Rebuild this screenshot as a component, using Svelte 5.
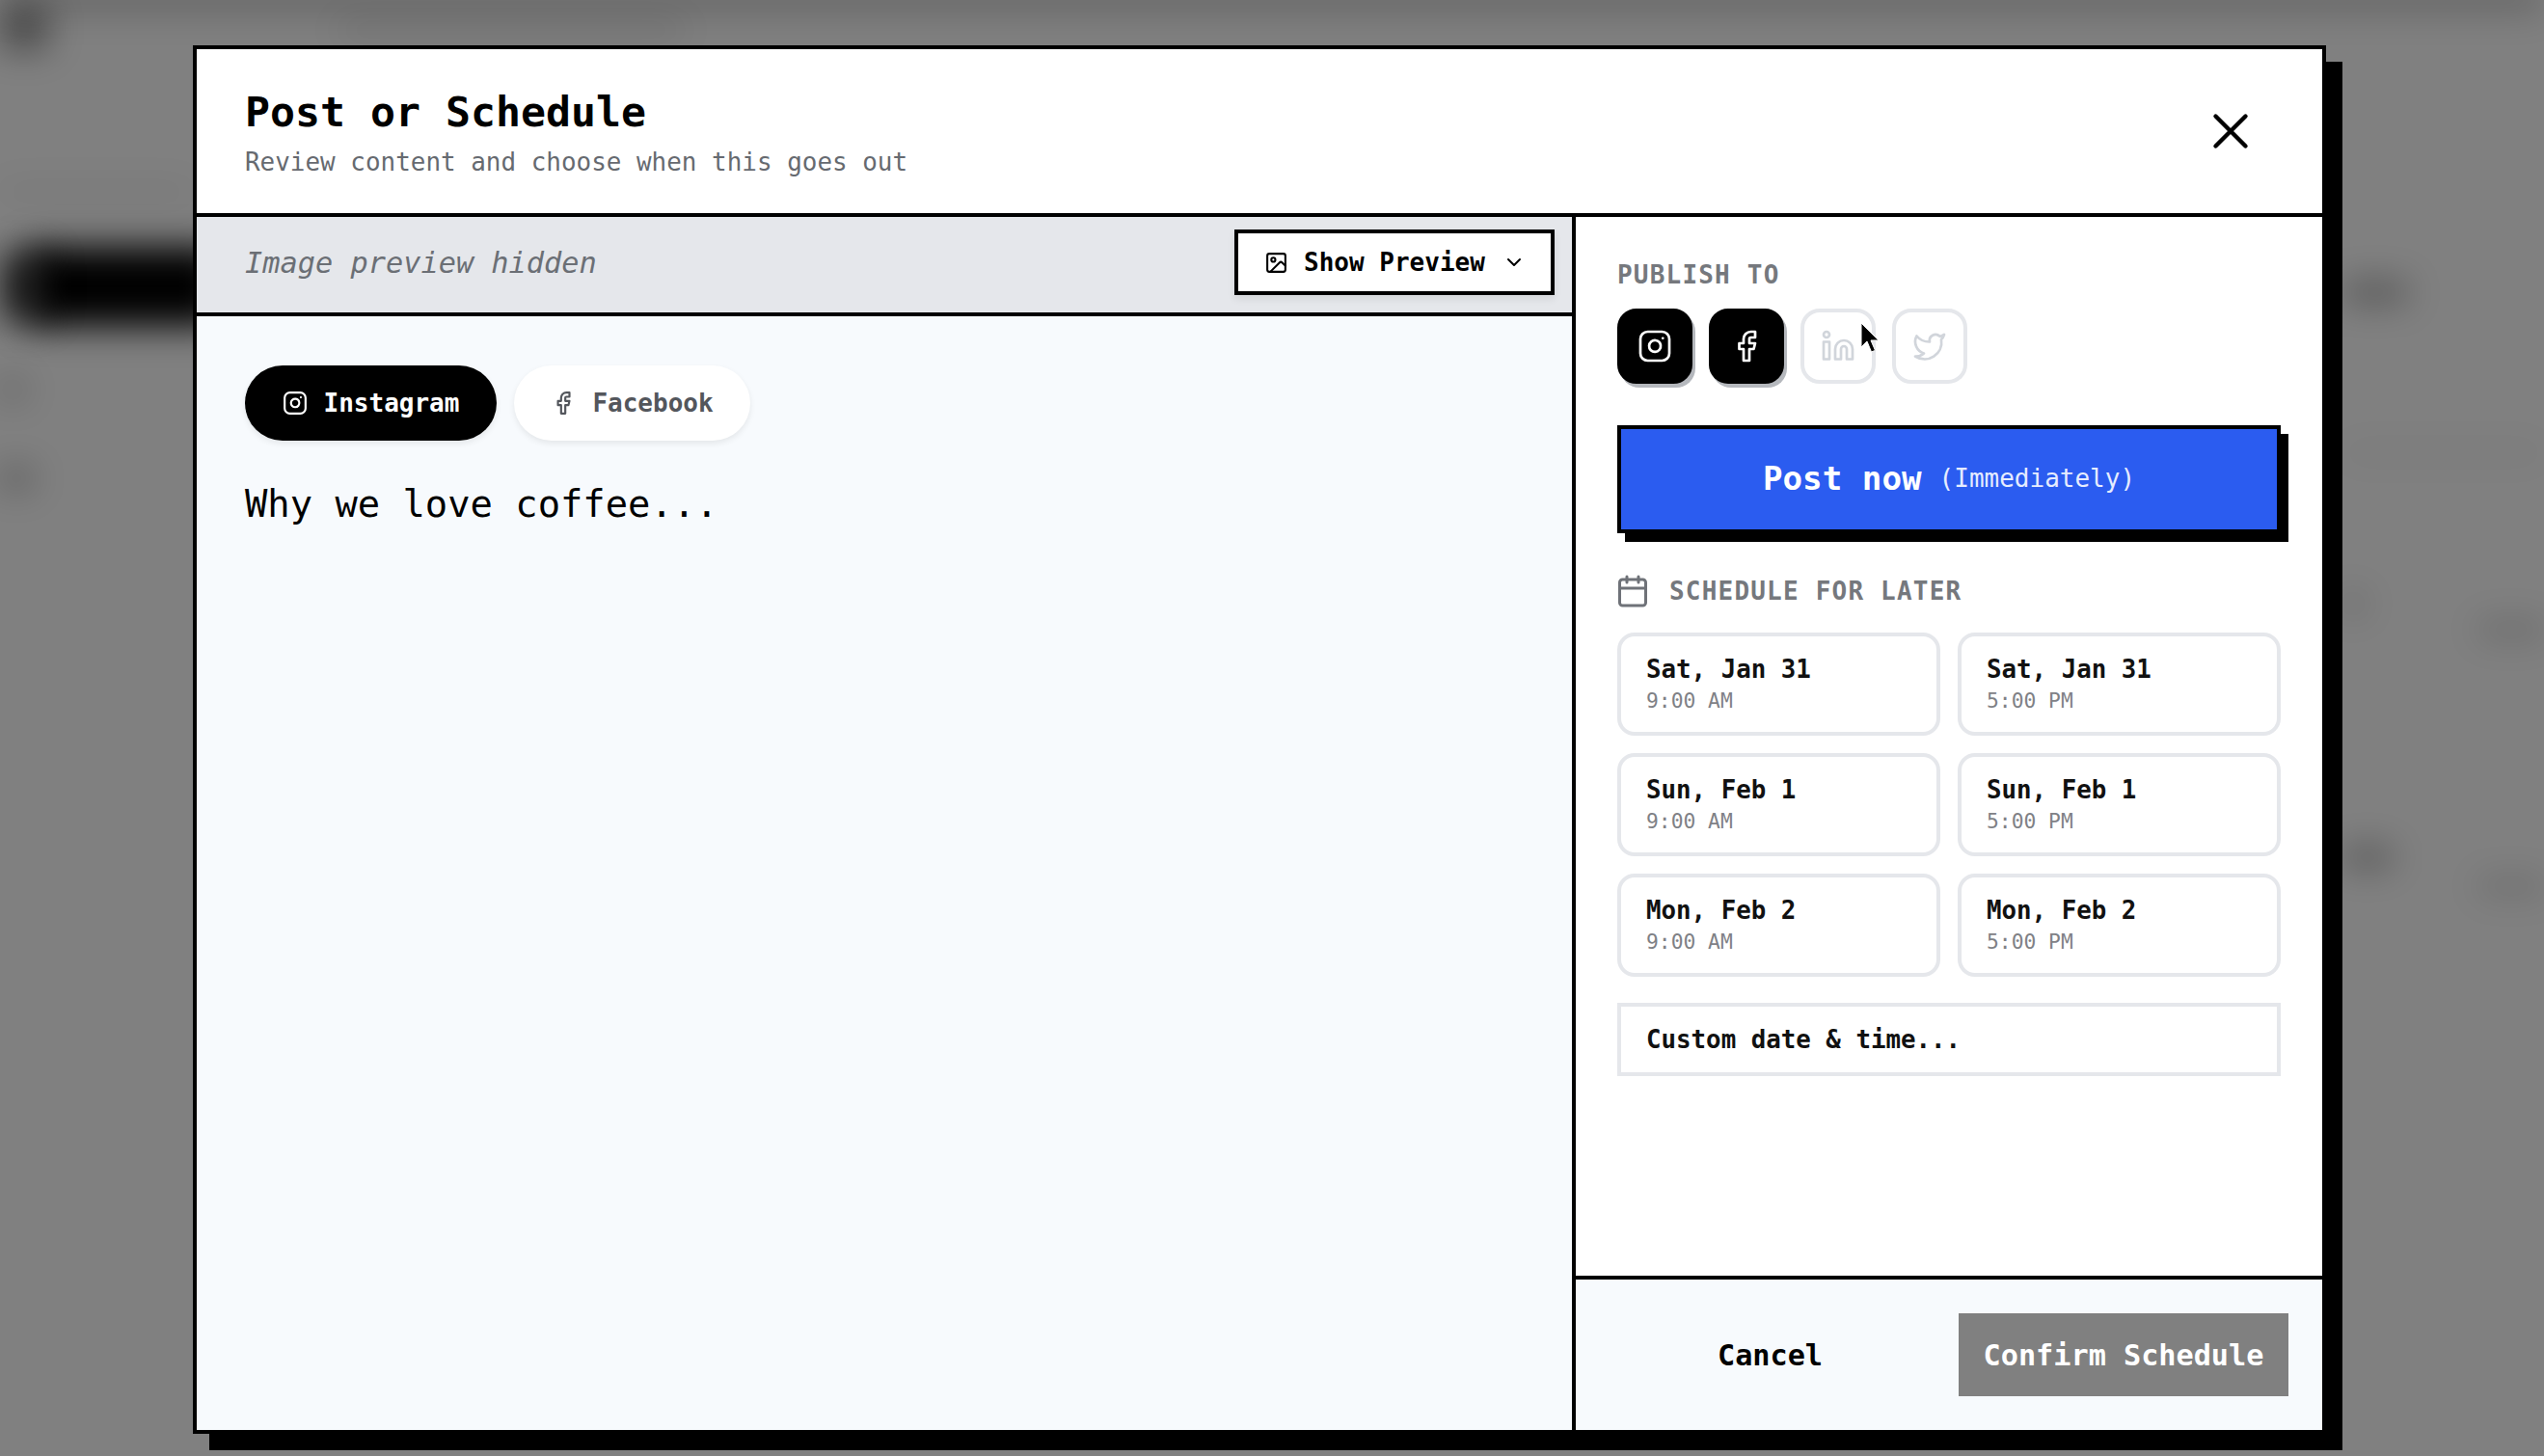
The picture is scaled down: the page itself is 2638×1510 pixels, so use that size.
<script lang="ts">
	const channels = [
		{ id: 'instagram', label: 'Instagram' },
		{ id: 'facebook', label: 'Facebook' }
	];

	const targets = [
		{ id: 'instagram', on: true },
		{ id: 'facebook', on: true },
		{ id: 'linkedin', on: false },
		{ id: 'twitter', on: false }
	];

	const days = ['Sat, Jan 31', 'Sun, Feb 1', 'Mon, Feb 2'];
	const slots = days.flatMap((day) => [
		{ day, time: '9:00 AM' },
		{ day, time: '5:00 PM' }
	]);

	// blurred leftovers of the page behind the dialog
	const smudges = [
		{ x: 0, y: 6, w: 50, h: 46, o: 0.4 },
		{ x: 0, y: -14, w: 2638, h: 26, o: 0.22 },
		{ x: 350, y: 22, w: 360, h: 18, o: 0.1 },
		{ x: 30, y: 256, w: 200, h: 82, o: 1 },
		{ x: 0, y: 262, w: 50, h: 70, o: 0.7 },
		{ x: 0, y: 195, w: 200, h: 8, o: 0.14 },
		{ x: 0, y: 392, w: 26, h: 24, o: 0.22 },
		{ x: 0, y: 484, w: 34, h: 24, o: 0.28 },
		{ x: 2430, y: 292, w: 66, h: 22, o: 0.34 },
		{ x: 2430, y: 465, w: 208, h: 8, o: 0.1 },
		{ x: 2430, y: 615, w: 20, h: 22, o: 0.22 },
		{ x: 2570, y: 645, w: 68, h: 16, o: 0.2 },
		{ x: 2430, y: 878, w: 50, h: 22, o: 0.32 },
		{ x: 2570, y: 912, w: 68, h: 14, o: 0.2 }
	];

	let activeChannel = $state('instagram');
</script>

{#snippet icon(name: string)}
	<svg class="icon" viewBox="0 0 24 24" fill="none" stroke="currentColor" stroke-linecap="round" stroke-linejoin="round">
		{#if name === 'instagram'}
			<rect x="2" y="2" width="20" height="20" rx="5" />
			<path d="M16 11.37A4 4 0 1 1 12.63 8 4 4 0 0 1 16 11.37z" />
			<path d="M17.5 6.5h.01" />
		{:else if name === 'facebook'}
			<path d="M18 2h-3a5 5 0 0 0-5 5v3H7v4h3v8h4v-8h3l1-4h-4V7a1 1 0 0 1 1-1h3z" />
		{:else if name === 'linkedin'}
			<path d="M16 8a6 6 0 0 1 6 6v7h-4v-7a2 2 0 0 0-2-2 2 2 0 0 0-2 2v7h-4v-7a6 6 0 0 1 6-6z" />
			<rect x="2" y="9" width="4" height="12" />
			<circle cx="4" cy="4" r="2" />
		{:else if name === 'twitter'}
			<path d="M22 4s-.7 2.1-2 3.4c1.6 10-9.4 17.3-18 11.6 2.2.1 4.4-.6 6-2C3 15.5.5 9.6 3 5c2.2 2.6 5.6 4.1 9 4-.9-4.2 4-6.6 7-3.8 1.1 0 3-1.2 3-1.2z" />
		{:else if name === 'calendar'}
			<path d="M8 2v4M16 2v4M3 10h18" />
			<rect x="3" y="4" width="18" height="18" rx="2" />
		{:else if name === 'image'}
			<rect x="3" y="3" width="18" height="18" rx="2" />
			<circle cx="9" cy="9" r="2" />
			<path d="m21 15-3.086-3.086a2 2 0 0 0-2.828 0L6 21" />
		{:else if name === 'chevron'}
			<path d="m6 9 6 6 6-6" />
		{:else if name === 'close'}
			<path d="M18 6 6 18M6 6l12 12" />
		{/if}
	</svg>
{/snippet}

<div class="overlay">
	<div class="backdrop" aria-hidden="true">
		{#each smudges as s}
			<span class="smudge" style={`left:${s.x}px;top:${s.y}px;width:${s.w}px;height:${s.h}px;opacity:${s.o}`}></span>
		{/each}
	</div>

	<div class="modal" role="dialog" aria-labelledby="modal-title">
		<header class="modal__header">
			<div>
				<h2 id="modal-title">Post or Schedule</h2>
				<p>Review content and choose when this goes out</p>
			</div>
			<button class="close" aria-label="Close">{@render icon('close')}</button>
		</header>

		<div class="modal__body">
			<section class="editor">
				<div class="preview-bar">
					<span class="preview-bar__hint">Image preview hidden</span>
					<button class="preview-toggle">
						<span class="preview-toggle__icon">{@render icon('image')}</span>
						Show Preview
						<span class="preview-toggle__chevron">{@render icon('chevron')}</span>
					</button>
				</div>
				<div class="editor__content">
					<div class="pills">
						{#each channels as c}
							<button
								class="pill"
								class:pill--active={activeChannel === c.id}
								onclick={() => (activeChannel = c.id)}
							>
								<span class="pill__icon">{@render icon(c.id)}</span>
								{c.label}
							</button>
						{/each}
					</div>
					<p class="caption">Why we love coffee...</p>
				</div>
			</section>

			<aside class="side">
				<div class="side__scroll">
					<h3 class="label">PUBLISH TO</h3>
					<div class="targets">
						{#each targets as t}
							<button class="target" class:target--on={t.on} aria-label={t.id}>{@render icon(t.id)}</button>
						{/each}
					</div>

					<button class="post-now"><strong>Post now</strong> <span>(Immediately)</span></button>

					<h3 class="label label--schedule">
						<span class="label__icon">{@render icon('calendar')}</span>
						SCHEDULE FOR LATER
					</h3>
					<div class="slots">
						{#each slots as slot}
							<button class="slot">
								<span class="slot__day">{slot.day}</span>
								<span class="slot__time">{slot.time}</span>
							</button>
						{/each}
					</div>
					<button class="custom">Custom date &amp; time...</button>
				</div>

				<footer class="side__footer">
					<button class="cancel">Cancel</button>
					<button class="confirm">Confirm Schedule</button>
				</footer>
			</aside>
		</div>
	</div>

	<svg class="cursor" viewBox="0 0 18 30" aria-hidden="true">
		<path d="M0 0v25l6-6 4.500 11 4-1.600-4.500-10.400h8z" fill="#000" stroke="#fff" stroke-width="1" />
	</svg>
</div>

<style>
	:global(body) {
		margin: 0;
		background: #808080;
	}

	button {
		font: inherit;
		color: inherit;
		background: none;
		border: 0;
		padding: 0;
		cursor: pointer;
	}

	h2,
	h3,
	p {
		margin: 0;
	}

	.icon {
		display: block;
		width: 100%;
		height: 100%;
		stroke-width: 2;
	}

	.overlay {
		position: relative;
		box-sizing: border-box;
		width: 2638px;
		height: 1510px;
		padding: 47px 0 0 200px;
		overflow: hidden;
		background: #808080;
		font-family: 'DejaVu Sans Mono', 'Liberation Mono', monospace;
		color: #000;
	}

	.backdrop {
		position: absolute;
		inset: 0;
	}

	.smudge {
		position: absolute;
		background: #000;
		filter: blur(18px);
	}

	/* ── Dialog frame ─────────────────────────── */
	.modal {
		position: relative;
		box-sizing: border-box;
		display: flex;
		flex-direction: column;
		width: 2212px;
		height: 1440px;
		background: #fff;
		border: 4px solid #000;
		box-shadow: 17px 17px 0 #000;
	}

	.modal__header {
		box-sizing: border-box;
		display: flex;
		justify-content: space-between;
		align-items: center;
		height: 174px;
		padding: 3px 64px 0 50px;
		border-bottom: 4px solid #000;
	}

	.modal__header h2 {
		font-size: 43.200px;
		line-height: 52px;
		font-weight: 700;
	}

	.modal__header p {
		margin-top: 9px;
		font-size: 25.950px;
		line-height: 34px;
		color: #666a70;
	}

	.close {
		width: 62px;
		height: 62px;
		margin-top: -3px;
	}

	.close .icon {
		stroke-width: 1.700;
	}

	.modal__body {
		flex: 1;
		display: flex;
		min-height: 0;
	}

	/* ── Left column ──────────────────────────── */
	.editor {
		box-sizing: border-box;
		display: flex;
		flex-direction: column;
		width: 1430px;
		border-right: 4px solid #000;
		background: #f7fafd;
	}

	.preview-bar {
		box-sizing: border-box;
		display: flex;
		align-items: center;
		justify-content: space-between;
		height: 103px;
		padding: 0 18px 5px 50px;
		background: #e5e7eb;
		border-bottom: 4px solid #000;
	}

	.preview-bar__hint {
		font-size: 30.300px;
		font-style: italic;
		color: #6b6f75;
	}

	.preview-toggle {
		box-sizing: border-box;
		display: flex;
		align-items: center;
		width: 332px;
		height: 68px;
		padding-left: 27px;
		background: #fff;
		border: 4px solid #000;
		font-size: 26px;
		font-weight: 700;
		box-shadow: 0 4px 8px rgba(0, 0, 0, 0.08);
	}

	.preview-toggle__icon {
		width: 25px;
		height: 25px;
		margin-right: 16px;
	}

	.preview-toggle__chevron {
		width: 24px;
		height: 24px;
		margin-left: 18px;
	}

	.editor__content {
		flex: 1;
		padding: 51px 50px;
	}

	.pills {
		display: flex;
		gap: 18px;
	}

	.pill {
		box-sizing: border-box;
		display: flex;
		align-items: center;
		justify-content: center;
		gap: 17px;
		width: 245px;
		height: 78px;
		border-radius: 39px;
		background: #fff;
		color: #53565c;
		font-size: 26px;
		font-weight: 700;
		box-shadow: 0 3px 6px rgba(0, 0, 0, 0.08);
	}

	.pill--active {
		width: 261px;
		background: #000;
		color: #fff;
	}

	.pill__icon {
		width: 26px;
		height: 26px;
	}

	.caption {
		margin-top: 41px;
		font-size: 38.800px;
		line-height: 50px;
		color: #000;
	}

	/* ── Right column ─────────────────────────── */
	.side {
		flex: 1;
		display: flex;
		flex-direction: column;
		min-width: 0;
	}

	.side__scroll {
		flex: 1;
		padding: 45px 43px 0;
	}

	.label {
		font-size: 26px;
		line-height: 30px;
		font-weight: 700;
		letter-spacing: 1.200px;
		color: #75787d;
	}

	.label--schedule {
		display: flex;
		align-items: center;
		gap: 20px;
		margin-top: 42px;
	}

	.label__icon {
		width: 36px;
		height: 36px;
		margin-left: -2px;
		color: #6f7278;
	}

	.targets {
		display: flex;
		gap: 17px;
		margin-top: 20px;
	}

	.target {
		box-sizing: border-box;
		display: flex;
		align-items: center;
		justify-content: center;
		width: 78px;
		height: 78px;
		padding: 17px;
		border-radius: 20px;
		border: 4px solid #e5e7eb;
		color: #d1d5db;
	}

	.target .icon {
		stroke-width: 1.800;
	}

	.target--on {
		background: #000;
		border-color: #000;
		color: #fff;
		box-shadow: 3px 4px 0 #b5b8bd;
	}

	.post-now {
		box-sizing: border-box;
		display: flex;
		align-items: center;
		justify-content: center;
		gap: 18px;
		width: 688px;
		height: 112px;
		margin-top: 43px;
		padding-bottom: 2px;
		background: #2b5cf0;
		border: 4px solid #000;
		color: #fff;
		box-shadow: 8px 9px 0 #000;
	}

	.post-now strong {
		font-size: 34.200px;
	}

	.post-now span {
		font-size: 26px;
		color: #e6ecff;
	}

	.slots {
		display: grid;
		grid-template-columns: 1fr 1fr;
		gap: 18px;
		margin-top: 25px;
		width: 688px;
	}

	.slot {
		box-sizing: border-box;
		display: flex;
		flex-direction: column;
		justify-content: center;
		height: 107px;
		padding: 0 26px 2px;
		border: 4px solid #e5e7eb;
		border-radius: 18px;
		background: #fff;
		text-align: left;
	}

	.slot__day {
		font-size: 25.800px;
		line-height: 34px;
		font-weight: 700;
		color: #111;
	}

	.slot__time {
		margin-top: 2px;
		font-size: 21.300px;
		line-height: 28px;
		color: #7f8186;
	}

	.custom {
		box-sizing: border-box;
		display: block;
		width: 688px;
		height: 76px;
		margin-top: 27px;
		padding: 0 26px;
		border: 4px solid #e5e7eb;
		background: #fff;
		font-size: 25.800px;
		font-weight: 700;
		text-align: left;
		color: #111;
	}

	.side__footer {
		box-sizing: border-box;
		display: flex;
		align-items: center;
		justify-content: flex-end;
		height: 160px;
		padding: 0 35px 0 0;
		background: #f7fafd;
		border-top: 4px solid #000;
	}

	.cancel {
		margin-right: 141px;
		font-size: 30.200px;
		font-weight: 700;
	}

	.confirm {
		width: 342px;
		height: 86px;
		background: #808080;
		color: #fff;
		font-size: 30.200px;
		font-weight: 700;
	}

	.cursor {
		position: absolute;
		left: 1930px;
		top: 335px;
		width: 18px;
		height: 30px;
	}
</style>
